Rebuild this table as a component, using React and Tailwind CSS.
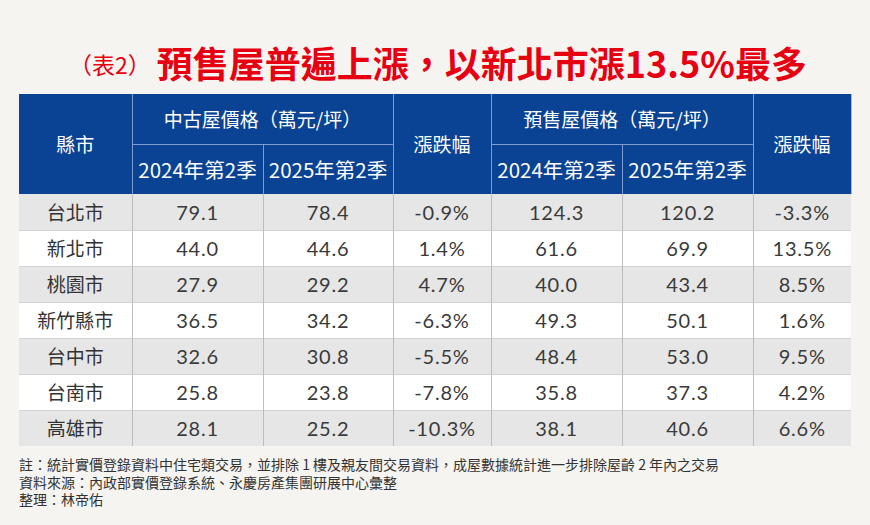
import React from "react";

const rows = [
  ["台北市", "79.1", "78.4", "-0.9%", "124.3", "120.2", "-3.3%"],
  ["新北市", "44.0", "44.6", "1.4%", "61.6", "69.9", "13.5%"],
  ["桃園市", "27.9", "29.2", "4.7%", "40.0", "43.4", "8.5%"],
  ["新竹縣市", "36.5", "34.2", "-6.3%", "49.3", "50.1", "1.6%"],
  ["台中市", "32.6", "30.8", "-5.5%", "48.4", "53.0", "9.5%"],
  ["台南市", "25.8", "23.8", "-7.8%", "35.8", "37.3", "4.2%"],
  ["高雄市", "28.1", "25.2", "-10.3%", "38.1", "40.6", "6.6%"],
];

const cjk = "font-['Noto_Sans_CJK_TC','Noto_Sans',sans-serif]";

export default function App() {
  return (
    <div className={`w-[870px] h-[525px] bg-[#f5f4f0] ${cjk} overflow-hidden`}>
      <div className="h-[94px] flex items-center justify-center pt-[30px] pl-[6px]">
        <span className="text-[#e60012] text-[23px] leading-none mr-[6px] mt-[4px]">（表2）</span>
        <span className="text-[#e60012] text-[36px] font-bold leading-none">
          預售屋普遍上漲，以新北市漲13.5%最多
        </span>
      </div>
      <div className="px-[19px]">
        <table className="w-[832px] table-fixed border-collapse">
          <colgroup>
            <col className="w-[113px]" />
            <col className="w-[131px]" />
            <col className="w-[130px]" />
            <col className="w-[98px]" />
            <col className="w-[131px]" />
            <col className="w-[131px]" />
            <col className="w-[98px]" />
          </colgroup>
          <thead className="bg-[#0a4393] text-white text-[19px]">
            <tr className="h-[50px]">
              <th rowSpan={2} className="font-normal border-r border-[#7d9bd0]">縣市</th>
              <th colSpan={2} className="font-normal border-r border-b border-[#7d9bd0]">中古屋價格（萬元/坪）</th>
              <th rowSpan={2} className="font-normal border-r border-[#7d9bd0]">漲跌幅</th>
              <th colSpan={2} className="font-normal border-r border-b border-[#7d9bd0]">預售屋價格（萬元/坪）</th>
              <th rowSpan={2} className="font-normal border-r border-[#9fb6dd]">漲跌幅</th>
            </tr>
            <tr className="h-[50px] text-[20.5px]">
              <th className="font-normal border-r border-[#7d9bd0] whitespace-nowrap">2024年第2季</th>
              <th className="font-normal border-r border-[#7d9bd0] whitespace-nowrap">2025年第2季</th>
              <th className="font-normal border-r border-[#7d9bd0] whitespace-nowrap">2024年第2季</th>
              <th className="font-normal border-r border-[#7d9bd0] whitespace-nowrap">2025年第2季</th>
            </tr>
          </thead>
          <tbody>
            {rows.map((r, i) => (
              <tr
                key={r[0]}
                className={`h-[36px] ${i % 2 === 0 ? "bg-[#e6e6e6]" : "bg-white"} border-b border-[#d2d2d2] last:border-b-0`}
              >
                {r.map((c, j) => (
                  <td
                    key={j}
                    className={`text-center p-0 ${j < 6 ? "border-r border-[#bdbdbd]" : ""} ${
                      j === 0
                        ? "text-[19px] text-[#333]"
                        : "font-['Lato','Noto_Sans',sans-serif] text-[20px] text-[#3a3a3a] tracking-[0.8px]"
                    }`}
                  >
                    {c}
                  </td>
                ))}
              </tr>
            ))}
          </tbody>
        </table>
        <div className="mt-[10px] flex flex-col gap-[1px] text-[14px] leading-[16.5px] text-[#333]">
          <p>註：統計實價登錄資料中住宅類交易，並排除 1 樓及親友間交易資料，成屋數據統計進一步排除屋齡 2 年內之交易</p>
          <p>資料來源：內政部實價登錄系統、永慶房產集團研展中心彙整</p>
          <p>整理：林帝佑</p>
        </div>
      </div>
    </div>
  );
}
